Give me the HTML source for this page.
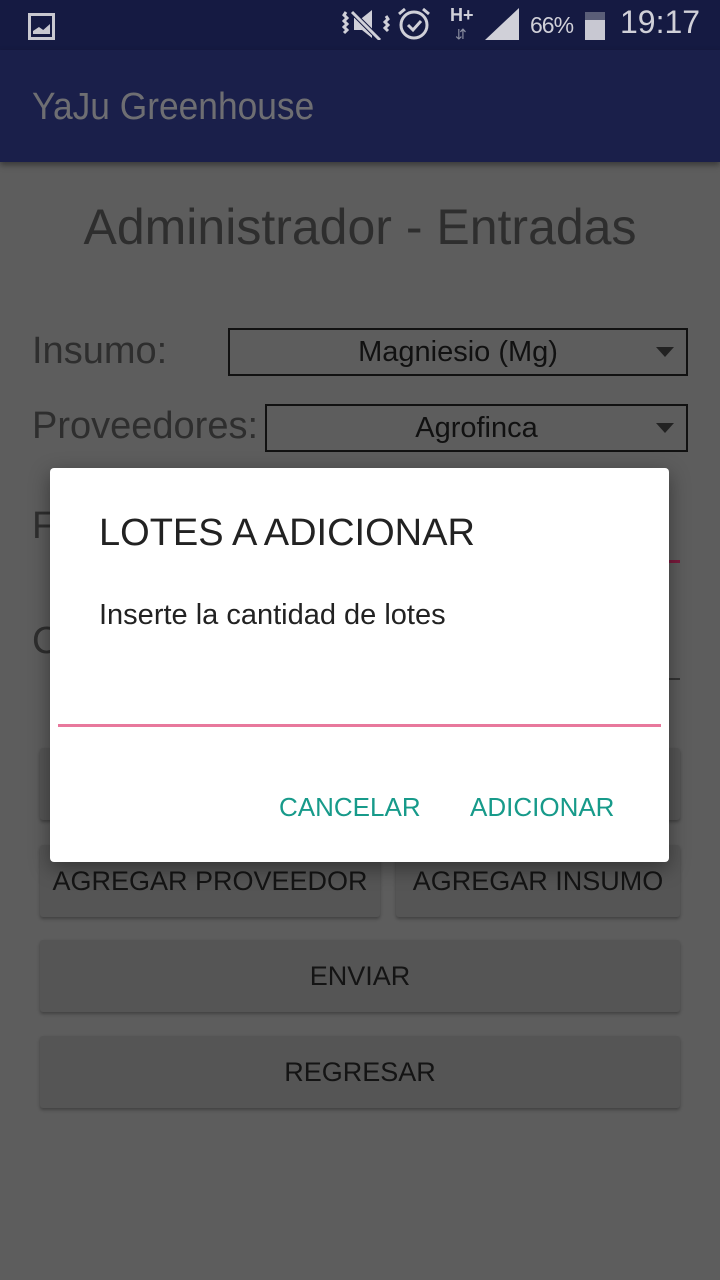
<!DOCTYPE html>
<html><head><meta charset="utf-8"><style>
*{margin:0;padding:0;box-sizing:border-box}
body{width:720px;height:1280px;background:#5d5d5d;font-family:"Liberation Sans",sans-serif;position:relative;overflow:hidden}
.a{position:absolute}
.sb{left:0;top:0;width:720px;height:50px;background:#151a42}
.ab{left:0;top:50px;width:720px;height:112px;background:#1a1f4a;box-shadow:0 3px 6px rgba(0,0,0,.4)}
.hand{font-family:"Liberation Sans Narrow","Liberation Sans",sans-serif;color:#2e2e2e;font-weight:300}
.sp{border:2px solid #111;height:48px;font-size:29px;color:#111;text-align:center;line-height:44px}
.tri{width:0;height:0;border-left:9px solid transparent;border-right:9px solid transparent;border-top:10px solid #222;position:absolute;right:12px;top:17px}
.btn{background:#555;border-radius:3px;box-shadow:0 2px 3px rgba(0,0,0,.3);font-size:27px;color:#141414;text-align:center;line-height:72px;height:72px}
.dlg{left:50px;top:468px;width:619px;height:394px;background:#fff;border-radius:4px;box-shadow:0 6px 20px rgba(0,0,0,.4)}
</style></head><body>
<div class="a sb"></div>
<div class="a" style="left:28px;top:13px;width:27px;height:27px;border:3px solid #c8c8d0"></div>
<div class="a" style="left:33px;top:24px;width:17px;height:10px;background:#c8c8d0;clip-path:polygon(0 100%,0 70%,35% 30%,60% 60%,100% 0,100% 100%)"></div>
<svg class="a" style="left:342px;top:8px" width="48" height="32" viewBox="0 0 48 32" fill="none" stroke="#d0d0d8" stroke-width="3"><path d="M4 4l-2 3 3 3-3 3 3 3-3 3 3 3-3 3M44 8l2 3-3 3 3 3-3 3 3 3"/><path d="M12 10h8l10-8v28l-10-8h-8z" fill="#d0d0d8" stroke="none"/><path d="M10 4l28 28" stroke="#151a42" stroke-width="5"/><path d="M10 4l28 28"/></svg>
<svg class="a" style="left:396px;top:6px" width="36" height="36" viewBox="0 0 36 36" fill="none" stroke="#d0d0d8" stroke-width="3"><circle cx="18" cy="19" r="13"/><path d="M12 19l5 5 8-9M3 8l6-5M33 8l-6-5"/></svg>
<div class="a" style="left:450px;top:5px;color:#d0d0d8;font-size:18px;font-weight:bold">H+</div>
<div class="a" style="left:455px;top:26px;color:#8a8ea0;font-size:14px">⇵</div>
<div class="a" style="left:485px;top:8px;width:34px;height:32px;background:#d0d0d8;clip-path:polygon(0 100%,100% 0,100% 100%)"></div>
<div class="a" style="left:530px;top:12px;color:#d0d0d8;font-size:23px;letter-spacing:-1px">66%</div>
<div class="a" style="left:585px;top:12px;width:20px;height:28px;background:#c8c8d2"></div>
<div class="a" style="left:585px;top:12px;width:20px;height:8px;background:#5a5e78"></div>
<div class="a" style="left:620px;top:4px;color:#d0d0d8;font-size:32px">19:17</div>
<div class="a ab"></div>
<div class="a" style="left:32px;top:86px;color:#6e6e72;font-size:38px;transform:scaleX(.93);transform-origin:left">YaJu Greenhouse</div>
<div class="a hand" style="left:0;width:720px;top:198px;text-align:center;font-size:50px">Administrador - Entradas</div>
<div class="a hand" style="left:32px;top:330px;font-size:38px">Insumo:</div>
<div class="a sp" style="left:228px;top:328px;width:460px">Magniesio (Mg)<div class="tri"></div></div>
<div class="a hand" style="left:32px;top:405px;font-size:38px">Proveedores:</div>
<div class="a sp" style="left:265px;top:404px;width:423px">Agrofinca<div class="tri"></div></div>
<div class="a hand" style="left:32px;top:505px;font-size:38px">F</div>
<div class="a hand" style="left:32px;top:620px;font-size:38px">C</div>
<div class="a" style="left:660px;top:560px;width:20px;height:3px;background:#7a1a3c"></div>
<div class="a" style="left:660px;top:678px;width:20px;height:2px;background:#333"></div>
<div class="a btn" style="left:40px;top:748px;width:640px"></div>
<div class="a btn" style="left:40px;top:845px;width:340px">AGREGAR PROVEEDOR</div>
<div class="a btn" style="left:396px;top:845px;width:284px">AGREGAR INSUMO</div>
<div class="a btn" style="left:40px;top:940px;width:640px">ENVIAR</div>
<div class="a btn" style="left:40px;top:1036px;width:640px">REGRESAR</div>
<div class="a dlg">
<div class="a" style="left:49px;top:44px;font-size:38px;color:#222">LOTES A ADICIONAR</div>
<div class="a" style="left:49px;top:131px;font-size:29px;color:#222">Inserte la cantidad de lotes</div>
<div class="a" style="left:8px;top:256px;width:603px;height:3px;background:#e8789c"></div>
<div class="a" style="left:229px;top:324px;font-size:26px;color:#179a8a">CANCELAR</div>
<div class="a" style="left:420px;top:324px;font-size:26px;color:#179a8a">ADICIONAR</div>
</div>
</body></html>
